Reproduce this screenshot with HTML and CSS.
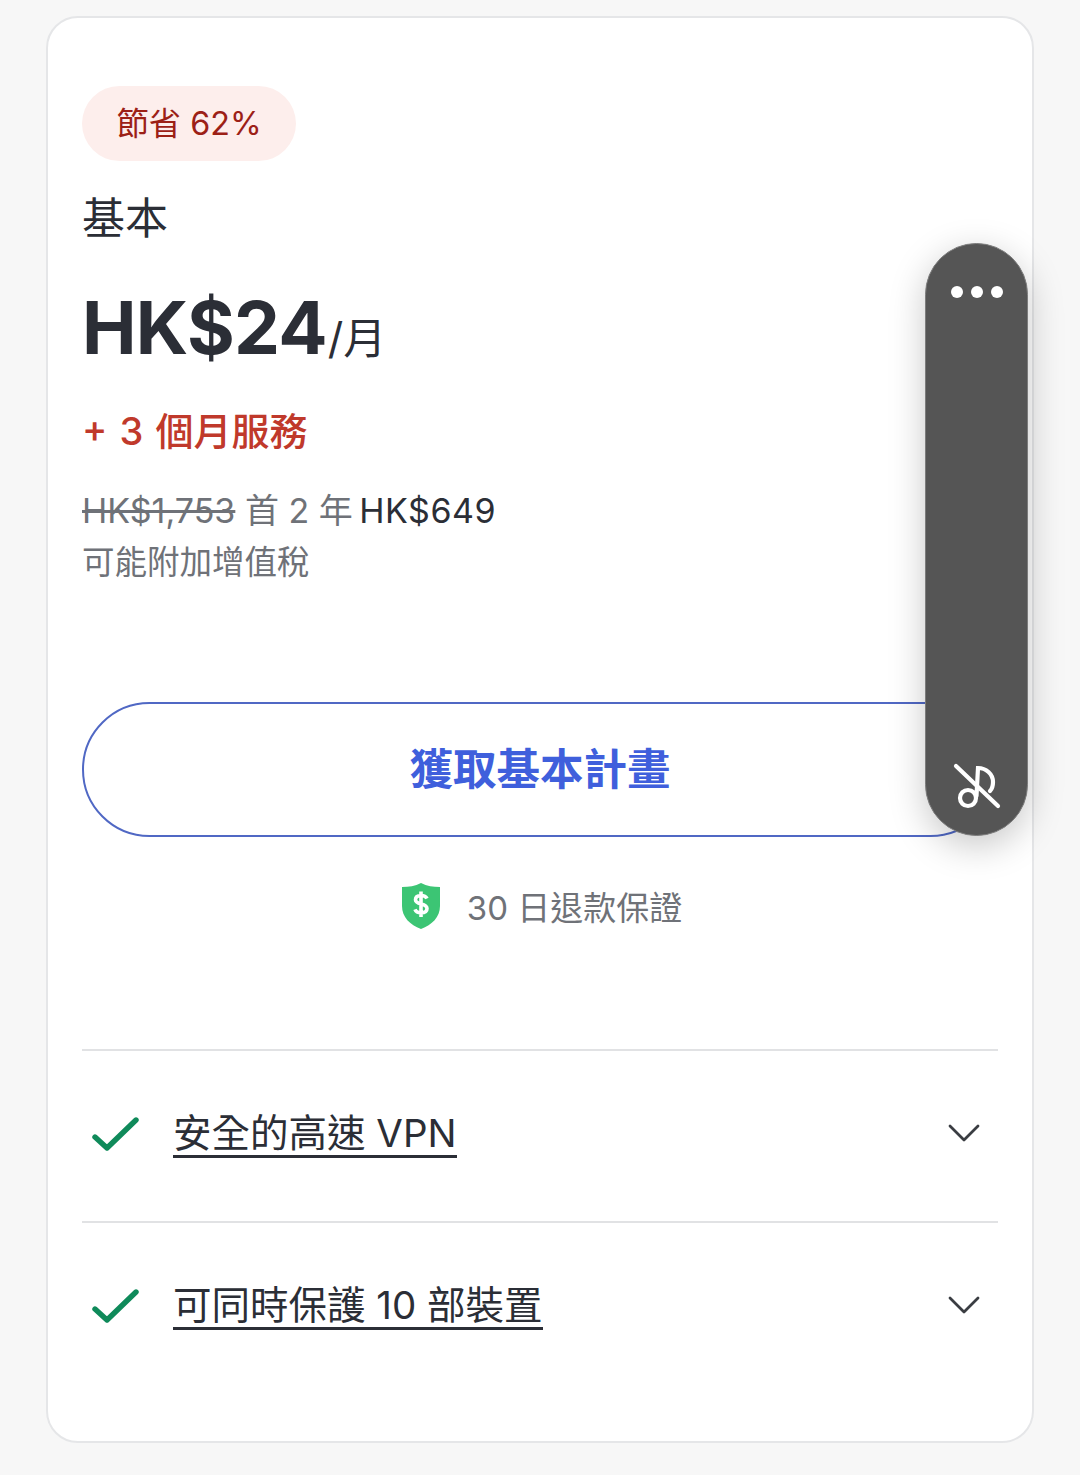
FILE: index.html
```html
<!DOCTYPE html>
<html lang="zh-Hant">
<head>
    <meta charset="UTF-8">
    <meta name="viewport" content="width=device-width, initial-scale=1.0">
    <title>基本計劃</title>
    <link rel="stylesheet" href="styles.css">
</head>
<body>
    <div class="plan-card">
        <span class="save-badge">節省 62%</span>
        <div class="plan-name">基本</div>
        <div class="price"><span class="price-amount">HK$24</span><span class="price-unit">/月</span></div>
        <div class="bonus">+ 3 個月服務</div>
        <div class="billing"><s>HK$1,753</s> 首 2 年 <span class="billing-now">HK$649</span></div>
        <div class="tax-note">可能附加增值稅</div>

        <a href="#" class="cta-button">獲取基本計畫</a>

        <div class="guarantee">
            <svg class="shield" viewBox="0 0 40 48" width="40" height="48">
                <path d="M20 1 C26 4 32 5 39 5 V24 C39 35 31 43 20 47 C9 43 1 35 1 24 V5 C8 5 14 4 20 1 Z" fill="#3cc574"/>
                <path d="M26 16.5 C25 14.5 23 13.5 20 13.5 C16.5 13.5 14.5 15.2 14.5 17.8 C14.5 23.5 26 20.5 26 26.5 C26 29.2 23.6 30.8 20 30.8 C17 30.8 14.8 29.6 14 27.4 M20 9.5 V35" fill="none" stroke="#fff" stroke-width="3.6"/>
            </svg>
            <span>30 日退款保證</span>
        </div>

        <ul class="features">
            <li class="feature">
                <svg class="check" viewBox="0 0 50 38" width="50" height="38"><path d="M5 22 L17 33 L46 5" fill="none" stroke="#0f8a5a" stroke-width="5.4" stroke-linecap="round" stroke-linejoin="round"/></svg>
                <a href="#" class="feature-label">安全的高速 VPN</a>
                <svg class="chevron" viewBox="0 0 32 20" width="32" height="20"><path d="M2 3 L16 17 L30 3" fill="none" stroke="#3a3d42" stroke-width="2.8" stroke-linecap="round" stroke-linejoin="round"/></svg>
            </li>
            <li class="feature">
                <svg class="check" viewBox="0 0 50 38" width="50" height="38"><path d="M5 22 L17 33 L46 5" fill="none" stroke="#0f8a5a" stroke-width="5.4" stroke-linecap="round" stroke-linejoin="round"/></svg>
                <a href="#" class="feature-label">可同時保護 10 部裝置</a>
                <svg class="chevron" viewBox="0 0 32 20" width="32" height="20"><path d="M2 3 L16 17 L30 3" fill="none" stroke="#3a3d42" stroke-width="2.8" stroke-linecap="round" stroke-linejoin="round"/></svg>
            </li>
        </ul>
    </div>

    <!-- Floating media pill, sits on top of the card -->
    <div class="media-pill">
        <div class="dots"><i></i><i></i><i></i></div>
        <svg class="mute-note" viewBox="0 0 48 48" width="48" height="48">
            <g fill="none" stroke="#fff" stroke-width="4.2" stroke-linecap="round">
                <circle cx="15" cy="36" r="8"/>
                <path d="M23.5 34 L25 6 C33 6 40 12 40 20 C40 24 39 27 37 29"/>
                <path d="M3 4 L45 44"/>
            </g>
        </svg>
    </div>
</body>
</html>
```

FILE: styles.css
```css
body {
    margin: 0;
    padding: 16px 46px 32px;
    font-family: Inter, "Noto Sans CJK TC", sans-serif;
    background-color: #f7f7f7;
    color: #2b2e36;
}

.plan-card {
    height: 1427px;
    box-sizing: border-box;
    padding: 68px 34px 0;
    background-color: #fff;
    border: 2px solid #e5e6e8;
    border-radius: 32px;
}

.save-badge {
    display: inline-block;
    padding: 0 34.5px;
    height: 75px;
    line-height: 75px;
    border-radius: 38px;
    background-color: #fdeeec;
    color: #9c2016;
    font-size: 32.3px;
}

.plan-name {
    margin-top: 29px;
    font-size: 43px;
    line-height: 56px;
}

.price {
    margin-top: 37px;
    height: 90px;
    line-height: 90px;
}

.price-amount {
    font-size: 73px;
    font-weight: 650;
    letter-spacing: -0.7px;
}

.price-unit {
    margin-left: 1px;
    font-size: 43px;
}

.bonus {
    margin-top: 33px;
    color: #c0392b;
    font-size: 38px;
    font-weight: 500;
    word-spacing: 2px;
    line-height: 50px;
}

.billing {
    margin-top: 30px;
    color: #6f7278;
    font-size: 34px;
    line-height: 50px;
}

.billing-now {
    margin-left: -3px;
    letter-spacing: 0.5px;
    color: #2b2e36;
}

.tax-note {
    margin-top: 1px;
    color: #6f7278;
    font-size: 32.5px;
    line-height: 52px;
}

.cta-button {
    display: block;
    margin-top: 113px;
    height: 135px;
    box-sizing: border-box;
    line-height: 131px;
    border: 2px solid #5068c4;
    border-radius: 68px;
    text-align: center;
    color: #3f5fdc;
    font-size: 43.5px;
    font-weight: 700;
    text-decoration: none;
}

.guarantee {
    display: flex;
    justify-content: center;
    align-items: center;
    gap: 26px;
    margin-top: 45px;
    padding-left: 3px;
    color: #6f7278;
    font-size: 33px;
}

.features {
    list-style: none;
    margin: 119px 0 0;
    padding: 0;
}

.feature {
    display: flex;
    align-items: center;
    height: 166px;
    padding: 0 18px 4px 8px;
    border-top: 2px solid #e1e2e4;
}

.check {
    flex-shrink: 0;
}

.feature-label {
    margin-left: 33px;
    color: #2b2e36;
    font-size: 38.5px;
    line-height: 44px;
    text-decoration: none;
    border-bottom: 3px solid #2b2e36;
}

.chevron {
    margin-left: auto;
    margin-bottom: 2px;
}

.media-pill {
    position: absolute;
    left: 925px;
    top: 243px;
    width: 103px;
    height: 593px;
    box-sizing: border-box;
    padding: 42px 0 25px;
    display: flex;
    flex-direction: column;
    justify-content: space-between;
    align-items: center;
    border: 1px solid #7c7c7c;
    border-radius: 52px;
    background-color: #555;
    box-shadow: 0 10px 36px rgba(0, 0, 0, 0.22);
}

.dots {
    display: flex;
    gap: 8px;
}

.dots i {
    width: 12px;
    height: 12px;
    border-radius: 50%;
    background-color: #fff;
}
```
